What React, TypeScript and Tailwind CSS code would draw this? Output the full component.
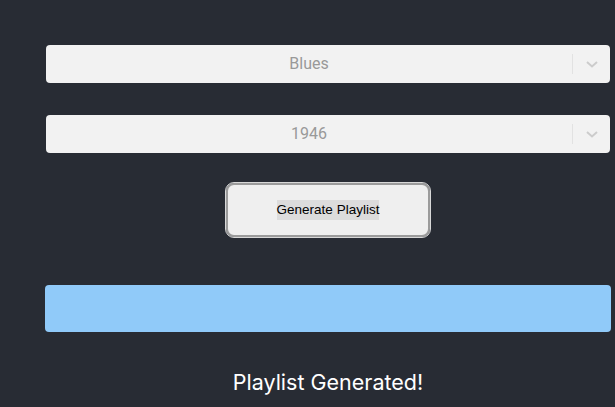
import React from "react";

const SelectBox = ({ value }: { value: string }) => (
  <div className="flex h-[38px] w-[564px] items-center rounded-[4px] bg-[#f2f2f2]">
    <div className="flex-1 text-center text-[16px] text-[#999999]">{value}</div>
    <div className="h-[20px] w-px bg-[#e2e2e2]" />
    <div className="flex w-[37px] justify-center">
      <svg width="14" height="10" viewBox="0 0 14 10" fill="none">
        <path d="M2 3l5 4.5L12 3" stroke="#cccccc" strokeWidth="2" />
      </svg>
    </div>
  </div>
);

export default function App() {
  return (
    <div className="flex h-[407px] w-full flex-col items-start overflow-hidden bg-[#282c34] font-['Roboto',sans-serif]">
      <div className="ml-[46px] mt-[45px]">
        <SelectBox value="Blues" />
      </div>
      <div className="ml-[46px] mt-[32px]">
        <SelectBox value="1946" />
      </div>
      <div className="mt-[30px] flex w-full justify-center pl-[41px]">
        <button className="flex h-[54px] w-[204px] items-center justify-center rounded-[8px] border-2 border-[#9b9b9b] bg-[#efefef] outline outline-1 outline-[#d8d8d8] font-['Liberation_Sans',Arial,sans-serif] text-[13.5px] text-black">
          <span className="bg-[#dcdcdc]">Generate Playlist</span>
        </button>
      </div>
      <div className="ml-[45px] mt-[48px] h-[47px] w-[566px] rounded-[4px] bg-[#90caf9]" />
      <div className="mt-[34px] w-full pl-[41px] text-center font-['Inter',sans-serif] text-[21.5px] text-white">
        Playlist Generated!
      </div>
    </div>
  );
}
